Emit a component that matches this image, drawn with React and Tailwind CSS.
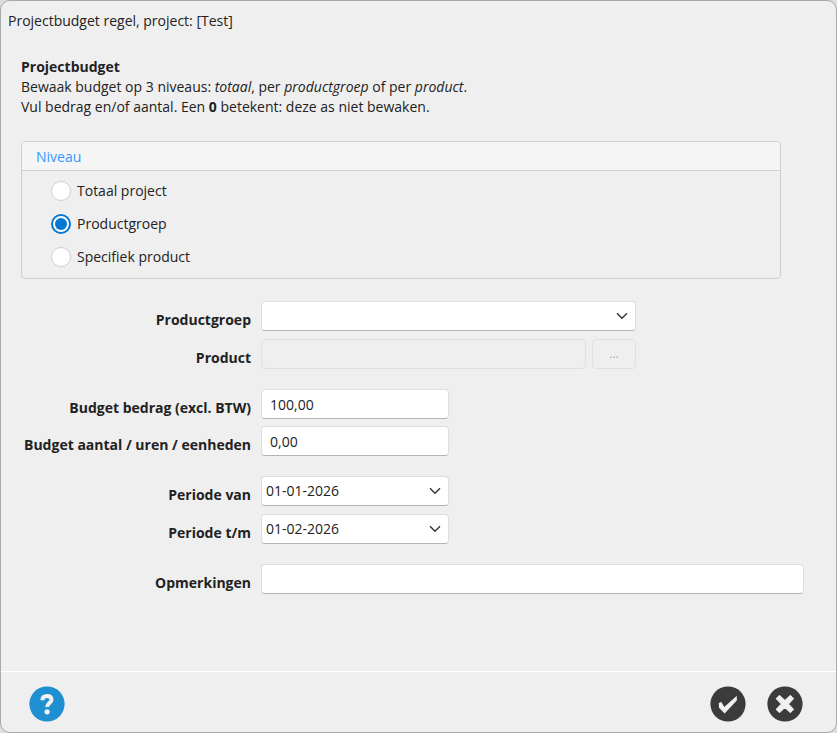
import React, { useState } from 'react';

const niveaus = [
  { value: 'totaal', label: 'Totaal project' },
  { value: 'groep', label: 'Productgroep' },
  { value: 'product', label: 'Specifiek product' },
];

const fieldClass =
  'block h-[30px] w-full rounded-[4px] border border-[#dedede] border-b-[#b4b4b4] bg-white text-[#222] outline-none focus:border-b-[#0078d4] disabled:border-[#e0e0e0] disabled:bg-transparent';

const Row = ({ id, label, children }) => (
  <div className="grid grid-cols-[230px_minmax(0,1fr)] gap-[10px]">
    <label htmlFor={id} className="pt-[9px] text-right font-bold leading-5 whitespace-nowrap">
      {label}
    </label>
    {children}
  </div>
);

const DropDown = ({ id, value, onChange, options }) => (
  <div className="relative">
    <select
      id={id}
      value={value}
      onChange={(e) => onChange(e.target.value)}
      className={`${fieldClass} appearance-none pr-8 pl-1`}
    >
      {options.map((option) => (
        <option key={option}>{option}</option>
      ))}
    </select>
    <svg
      viewBox="0 0 12 8"
      className="pointer-events-none absolute top-[11px] right-2 h-2 w-3"
      fill="none"
      stroke="#333"
      strokeWidth="1.4"
    >
      <path d="M1 1.2 6 6.2 11 1.2" />
    </svg>
  </div>
);

export default function App() {
  const [niveau, setNiveau] = useState('groep');
  const [groep, setGroep] = useState('');
  const [bedrag, setBedrag] = useState('100,00');
  const [aantal, setAantal] = useState('0,00');
  const [van, setVan] = useState('01-01-2026');
  const [tot, setTot] = useState('01-02-2026');
  const [opmerkingen, setOpmerkingen] = useState('');

  return (
    <div className="min-h-screen bg-[#dcdcdc] font-['Open_Sans','Noto_Sans',sans-serif] text-sm text-[#222]">
      <div className="flex min-h-screen flex-col rounded-[10px] border border-[#a9a9a9] bg-[#efefef]">
        <h1 className="px-[7px] pt-[10px] leading-5">Projectbudget regel, project: [Test]</h1>

        <main className="flex-1 pt-[26px] pr-8 pb-8 pl-5">
          <h2 className="font-bold leading-5">Projectbudget</h2>
          <p className="leading-5">
            Bewaak budget op 3 niveaus: <em>totaal</em>, per <em>productgroep</em> of per <em>product</em>.
          </p>
          <p className="leading-5">
            Vul bedrag en/of aantal. Een <b>0</b> betekent: deze as niet bewaken.
          </p>

          {/* Niveau */}
          <section
            role="radiogroup"
            aria-labelledby="niveau-titel"
            className="mt-6 mr-[23px] rounded-[4px] border border-[#cfcfcf]"
          >
            <h3
              id="niveau-titel"
              className="rounded-t-[3px] border-b border-[#cfcfcf] bg-[#f5f5f5] px-[14px] pt-[5px] pb-[3px] leading-5 text-[#3399ff]"
            >
              Niveau
            </h3>
            <div className="flex flex-col gap-[13px] px-[29px] pt-[10px] pb-[11px]">
              {niveaus.map((n) => (
                <label key={n.value} className="flex items-center gap-[6px] self-start leading-5">
                  <input
                    type="radio"
                    name="niveau"
                    value={n.value}
                    checked={niveau === n.value}
                    onChange={() => setNiveau(n.value)}
                    className="grid size-5 appearance-none place-items-center rounded-full border border-[#d0d0d0] bg-white checked:border-2 checked:border-[#0078d4] checked:before:size-3 checked:before:rounded-full checked:before:bg-[#0078d4]"
                  />
                  {n.label}
                </label>
              ))}
            </div>
          </section>

          {/* Velden */}
          <form className="mt-[22px] flex flex-col gap-5" onSubmit={(e) => e.preventDefault()}>
            <div className="flex flex-col gap-2">
              <Row id="productgroep" label="Productgroep">
                <div className="max-w-[375px]">
                  <DropDown id="productgroep" value={groep} onChange={setGroep} options={['']} />
                </div>
              </Row>
              <Row id="product" label="Product">
                <div className="flex max-w-[375px] items-center gap-[6px]">
                  <input id="product" type="text" disabled className={`${fieldClass} flex-1`} />
                  <button
                    type="button"
                    disabled
                    aria-label="Product zoeken"
                    className="h-[30px] w-11 rounded-[4px] border border-[#e0e0e0] text-xs text-[#aaa]"
                  >
                    ...
                  </button>
                </div>
              </Row>
            </div>

            <div className="flex flex-col gap-[7px]">
              <Row id="bedrag" label="Budget bedrag (excl. BTW)">
                <div className="max-w-[188px]">
                  <input
                    id="bedrag"
                    type="text"
                    value={bedrag}
                    onChange={(e) => setBedrag(e.target.value)}
                    className={`${fieldClass} px-2`}
                  />
                </div>
              </Row>
              <Row id="aantal" label="Budget aantal / uren / eenheden">
                <div className="max-w-[188px]">
                  <input
                    id="aantal"
                    type="text"
                    value={aantal}
                    onChange={(e) => setAantal(e.target.value)}
                    className={`${fieldClass} px-2`}
                  />
                </div>
              </Row>
            </div>

            <div className="flex flex-col gap-2">
              <Row id="van" label="Periode van">
                <div className="max-w-[188px]">
                  <DropDown id="van" value={van} onChange={setVan} options={['01-01-2026']} />
                </div>
              </Row>
              <Row id="tot" label="Periode t/m">
                <div className="max-w-[188px]">
                  <DropDown id="tot" value={tot} onChange={setTot} options={['01-02-2026']} />
                </div>
              </Row>
            </div>

            <Row id="opmerkingen" label="Opmerkingen">
              <input
                id="opmerkingen"
                type="text"
                value={opmerkingen}
                onChange={(e) => setOpmerkingen(e.target.value)}
                className={`${fieldClass} px-2`}
              />
            </Row>
          </form>
        </main>

        <footer className="flex items-center justify-between border-t border-white pt-[14px] pr-[33px] pb-[10px] pl-7">
          <button type="button" aria-label="Help">
            <svg viewBox="0 0 36 36" className="size-9">
              <circle cx="18" cy="18" r="17.6" fill="#1e8fd0" />
              <path
                d="M13.4 14.2C13.4 11.4 15.200 10 18.1 10c2.900 0 4.400 1.500 4.400 3.700 0 3.200-4.400 3.600-4.400 7.400"
                fill="none"
                stroke="#f2f2f2"
                strokeWidth="4"
              />
              <circle cx="18.1" cy="25.8" r="2.6" fill="#f2f2f2" />
            </svg>
          </button>
          <div className="flex gap-[21px]">
            <button type="button" aria-label="Opslaan">
              <svg viewBox="0 0 36 36" className="size-9">
                <circle cx="18" cy="18" r="17.6" fill="#3b3b3b" />
                <path d="M8.800 17 11.300 16 14.300 20.900 26.800 9.700V14.500L14.600 27.500 9 21.700Z" fill="#f0f0f0" />
              </svg>
            </button>
            <button type="button" aria-label="Annuleren">
              <svg viewBox="0 0 36 36" className="size-9">
                <circle cx="18" cy="18" r="17.6" fill="#3b3b3b" />
                <path
                  d="M12.500 9.600 17.900 14.800 23.300 9.600 26.400 12.700 21.200 18 26.400 23.300 23.300 26.400 17.900 21.200 12.500 26.400 9.400 23.300 14.600 18 9.400 12.700Z"
                  fill="#f0f0f0"
                  stroke="#f0f0f0"
                  strokeWidth="1.2"
                  strokeLinejoin="round"
                />
              </svg>
            </button>
          </div>
        </footer>
      </div>
    </div>
  );
}
